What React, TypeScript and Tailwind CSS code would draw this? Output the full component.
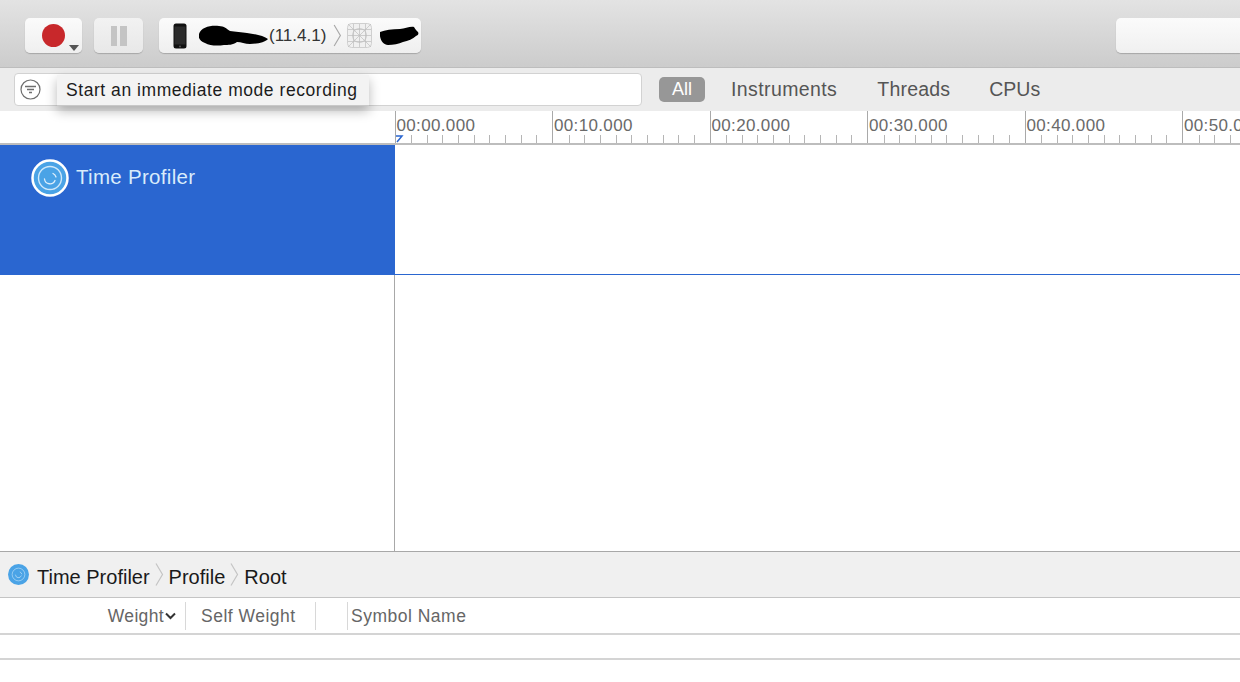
import React from "react";

const marks = ["00:00.000", "00:10.000", "00:20.000", "00:30.000", "00:40.000", "00:50.000"];

const ProfilerIcon = ({ size, border }: { size: number; border: boolean }) => (
  <svg width={size} height={size} viewBox="0 0 38 38" className="shrink-0">
    <circle cx="19" cy="19" r={border ? 17.5 : 19} fill="#4aa3e6" stroke={border ? "#fff" : "none"} strokeWidth="2.5" />
    <circle cx="19" cy="19" r="11.5" fill="none" stroke={border ? "#cfe8fa" : "#a9d5f5"} strokeWidth="1.4" />
    <path d="M13.5 20a5.5 5.5 0 0 0 10.5 1.5M22 14.5a6 6 0 0 1 3 3.5" fill="none" stroke={border ? "#dff0fc" : "#bfe0f8"} strokeWidth="1.3" strokeLinecap="round" />
  </svg>
);

const Chevron = ({ h, color }: { h: number; color: string }) => (
  <svg width="9" height={h} viewBox="0 0 9 24" className="shrink-0">
    <path d="M1 1l6.5 11L1 23" fill="none" stroke={color} strokeWidth="1.2" />
  </svg>
);

const Blob = ({ w, h, d }: { w: number; h: number; d: string }) => (
  <svg width={w} height={h} viewBox={`0 0 ${w} ${h}`} className="shrink-0">
    <path d={d} fill="#000" />
  </svg>
);

const RulerSegment = ({ label }: { label: string }) => (
  <div className="relative w-[157.5px] h-full shrink-0 border-l border-[#a9a9a9]">
    <span className="block pl-[1px] pt-[5px] text-[17px] leading-[19px] tracking-[0.35px] text-[#6a6a6a]">{label}</span>
    <div className="absolute left-0 bottom-0 w-full flex">
      {Array.from({ length: 10 }).map((_, i) => (
        <div key={i} className="w-[15.75px] h-[8px] flex justify-start">
          {i > 0 && <div className="w-px h-full bg-[#b5b5b5]" />}
        </div>
      ))}
    </div>
  </div>
);

export default function App() {
  return (
    <div className="relative w-[1240px] h-[682px] overflow-hidden bg-white flex flex-col font-['Liberation_Sans',Arial,sans-serif]">
      {/* toolbar */}
      <div className="h-[68px] shrink-0 flex items-start pt-[18px] pl-[25px] bg-gradient-to-b from-[#e3e3e3] to-[#cccccc] border-b border-[#bdbdbd]">
        <div className="relative w-[57px] h-[35px] rounded-[5px] bg-gradient-to-b from-[#fbfbfb] to-[#efefef] shadow-[0_1px_1px_rgba(0,0,0,0.2)] flex items-center pl-[17px]">
          <div className="w-[23px] h-[23px] rounded-full bg-[#c8282b]" />
          <div className="absolute right-[3px] bottom-[2px] w-0 h-0 border-x-[5px] border-x-transparent border-t-[6px] border-t-[#555]" />
        </div>
        <div className="ml-[12px] w-[49px] h-[35px] rounded-[5px] bg-gradient-to-b from-[#f2f2f2] to-[#e8e8e8] shadow-[0_1px_1px_rgba(0,0,0,0.2)] flex items-center justify-center gap-[3px]">
          <div className="w-[6.5px] h-[20px] bg-[#c4c4c4]" />
          <div className="w-[6.5px] h-[20px] bg-[#c4c4c4]" />
        </div>
        <div className="ml-[16px] w-[262px] h-[35px] rounded-[5px] bg-gradient-to-b from-[#fbfbfb] to-[#efefef] shadow-[0_1px_1px_rgba(0,0,0,0.2)] flex items-center pl-[14px]">
          <svg width="14" height="26" viewBox="0 0 14 26" className="shrink-0">
            <rect x="0.5" y="0.5" width="13" height="25" rx="2.5" fill="#111" />
            <rect x="1.5" y="3.5" width="11" height="18" fill="#2b2b2b" />
            <circle cx="7" cy="23.5" r="1" fill="#555" />
          </svg>
          <div className="ml-[12px] w-[70px] flex justify-start">
            <Blob w={70} h={22} d="M0 9C2 2 12 0 20 1c5 0 8 3 11 5 5 1 12 1 17 2 8 1 17 3 21 6-3 3-10 5-18 5-5 0-9-2-13-2-4 3-9 3-13 3-6 1-14 1-19-2C1 16-1 13 0 9z" />
          </div>
          <span className="text-[17px] leading-[20px] text-[#333]">(11.4.1)</span>
          <div className="ml-[7px]"><Chevron h={23} color="#a8a8a8" /></div>
          <svg width="25" height="25" viewBox="0 0 25 25" className="ml-[5px] shrink-0">
            <rect x="0.5" y="0.5" width="24" height="24" rx="4" fill="#f0f0f0" stroke="#cfcfcf" />
            <path d="M6.5 1v23M12.5 1v23M18.5 1v23M1 6.5h23M1 12.5h23M1 18.5h23M1 1l23 23M24 1L1 24" stroke="#bdbdbd" strokeWidth="0.7" fill="none" />
            <circle cx="12.5" cy="12.5" r="7" fill="none" stroke="#bdbdbd" strokeWidth="0.7" />
          </svg>
          <div className="ml-[8px]">
            <Blob w={39} h={20} d="M0 6c5-2 12-3 20-3 5 0 10-3 14-2 1 2 2 3 4 5 1 2 0 3-2 4-3 3-8 5-13 6-4 2-10 3-15 3C3 19-1 13 0 6z" />
          </div>
        </div>
        <div className="ml-auto w-[124px] h-[35px] rounded-l-[5px] bg-gradient-to-b from-[#fbfbfb] to-[#f0f0f0] shadow-[0_1px_1px_rgba(0,0,0,0.2)]" />
      </div>

      {/* filter bar */}
      <div className="h-[43px] shrink-0 bg-[#ececec] flex items-center pl-[14px]">
        <div className="w-[628px] h-[33px] bg-white border border-[#d2d2d2] rounded-[4px] flex items-center pl-[5px]">
          <svg width="21" height="21" viewBox="0 0 21 21">
            <circle cx="10.5" cy="10.5" r="9.5" fill="none" stroke="#6e6e6e" strokeWidth="1.2" />
            <path d="M5 7.5h11M7 10.5h7M9 13.5h3" stroke="#6e6e6e" strokeWidth="1.3" />
          </svg>
        </div>
        <div className="ml-[17px] w-[46px] h-[25px] rounded-[5px] bg-[#979797] text-white text-[18px] flex items-center justify-center">All</div>
        <span className="ml-[26px] text-[19.5px] tracking-[0.4px] text-[#555]">Instruments</span>
        <span className="ml-[40px] text-[19.5px] tracking-[0.2px] text-[#555]">Threads</span>
        <span className="ml-[39px] text-[19.5px] text-[#555]">CPUs</span>
      </div>

      {/* ruler */}
      <div className="h-[34px] shrink-0 flex border-b-2 border-[#bdbdbd] bg-white">
        <div className="w-[394.5px] shrink-0" />
        <div className="relative flex h-full">
          {marks.map((m) => (
            <RulerSegment key={m} label={m} />
          ))}
          <svg width="9" height="8" viewBox="0 0 9 8" className="absolute left-0 bottom-0">
            <path d="M1 1h6L2 7" fill="none" stroke="#2a66d0" strokeWidth="1.5" />
          </svg>
        </div>
      </div>

      {/* selected track */}
      <div className="h-[130px] shrink-0 flex">
        <div className="w-[394.5px] shrink-0 bg-[#2a66d0] flex items-start pl-[31px] pt-[14px] gap-[7px]">
          <ProfilerIcon size={38} border />
          <span className="text-[20.5px] leading-[36px] tracking-[0.3px] text-[#d9ecfb]">Time Profiler</span>
        </div>
        <div className="flex-1 bg-white border-b border-[#2a66d0]" />
      </div>

      {/* empty track area */}
      <div className="h-[277px] shrink-0 flex border-b border-[#a8a8a8]">
        <div className="w-[394px] shrink-0" />
        <div className="w-px bg-[#a8a8a8]" />
      </div>

      {/* breadcrumb */}
      <div className="h-[46px] shrink-0 bg-[#f0f0f0] border-b border-[#c4c4c4] flex items-center pl-[8px] text-[20px] text-[#1a1a1a]">
        <ProfilerIcon size={21} border={false} />
        <span className="ml-[8px] pt-[5px]">Time Profiler</span>
        <div className="ml-[5px]"><Chevron h={25} color="#c4c4c4" /></div>
        <span className="ml-[5px] pt-[5px]">Profile</span>
        <div className="ml-[5px]"><Chevron h={25} color="#c4c4c4" /></div>
        <span className="ml-[5px] pt-[5px]">Root</span>
      </div>

      {/* table header */}
      <div className="h-[37px] shrink-0 border-b-2 border-[#d4d4d4] flex items-center text-[17.5px] tracking-[0.5px] text-[#666]">
        <div className="w-[186px] h-[28px] shrink-0 flex items-center justify-end pr-[9px] border-r border-[#d8d8d8]">
          <span className="pt-[2px] tracking-[0.35px]">Weight</span>
          <svg width="11" height="8" viewBox="0 0 11 8" className="ml-[1px]">
            <path d="M1 1.5l4.5 4.5L10 1.5" fill="none" stroke="#333" strokeWidth="2" />
          </svg>
        </div>
        <div className="w-[130px] h-[28px] shrink-0 flex items-center pl-[15px] pt-[2px] border-r border-[#d8d8d8]">Self Weight</div>
        <div className="w-[32px] h-[28px] shrink-0 border-r border-[#d8d8d8]" />
        <div className="pl-[3px] pt-[2px]">Symbol Name</div>
      </div>

      {/* row */}
      <div className="h-[25px] shrink-0 border-b-2 border-[#d4d4d4]" />

      {/* tooltip */}
      <div className="absolute left-[57px] top-[75px] w-[312px] h-[31px] bg-[#f3f3f3] border-b border-[#c8c8c8] shadow-[0_5px_12px_rgba(0,0,0,0.28)] flex items-center pl-[9px] text-[17.5px] tracking-[0.55px] text-[#1c1c1c] whitespace-nowrap">
        Start an immediate mode recording
      </div>
    </div>
  );
}
